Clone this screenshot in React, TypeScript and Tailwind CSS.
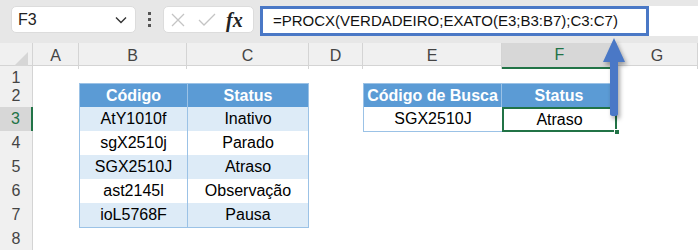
import React from "react";

// Column template shared by the header row and every sheet row
const cols = "grid grid-cols-[33px_46px_108px_122px_54px_139px_115px_1fr]";

const rowHeights = ["h-[17px]", "h-[24px]", "h-[24px]", "h-[24px]", "h-[24px]", "h-[24px]", "h-[24px]", "h-[23px]"];

const lookup = [
  ["AtY1010f", "Inativo"],
  ["sgX2510j", "Parado"],
  ["SGX2510J", "Atraso"],
  ["ast2145l", "Observação"],
  ["ioL5768F", "Pausa"],
];

const headCell = "bg-[#5b9bd5] text-white font-bold flex items-center justify-center border-b border-[#9bc2e6]";

const TopBar: React.FC = () => (
  <div className="h-[43px] bg-[#e7e7e7] flex items-start pt-[6px] relative">
    <div className="ml-[11px] w-[125px] h-[27px] bg-white rounded-[5px] border border-[#dcdcdc] flex items-center justify-between pl-[6px] pr-[8px]">
      <span className="text-[16px] text-[#222]">F3</span>
      <svg width="12" height="8" viewBox="0 0 12 8">
        <path d="M1 1.5 L6 6.5 L11 1.5" fill="none" stroke="#333" strokeWidth="1.4" />
      </svg>
    </div>
    <div className="w-[27px] h-[27px] flex flex-col items-center justify-center gap-[3px]">
      <span className="w-[3px] h-[3px] bg-[#555]" />
      <span className="w-[3px] h-[3px] bg-[#555]" />
      <span className="w-[3px] h-[3px] bg-[#555]" />
    </div>
    <div className="w-[91px] h-[27px] bg-white rounded-[5px] border border-[#dcdcdc] flex items-center pl-[6px]">
      <svg width="16" height="16" viewBox="0 0 16 16">
        <path d="M2 2 L14 14 M14 2 L2 14" stroke="#c4c4c4" strokeWidth="1.3" />
      </svg>
      <svg width="20" height="16" viewBox="0 0 20 16" className="ml-[11px]">
        <path d="M2 8 L7 13 L18 2" fill="none" stroke="#c4c4c4" strokeWidth="1.3" />
      </svg>
      <span className="ml-[9px] text-[20px] italic font-bold text-[#222] font-['Liberation_Serif',serif] leading-none">fx</span>
    </div>
    <div className="ml-[6px] flex-1 h-[30px] bg-white relative">
      <div className="absolute left-0 top-0 w-[389px] h-[30px] border-[3px] border-[#4a78c6] flex items-center pl-[10px]">
        <span className="text-[15px] text-[#111] whitespace-nowrap">=PROCX(VERDADEIRO;EXATO(E3;B3:B7);C3:C7)</span>
      </div>
    </div>
  </div>
);

const ColHeaders: React.FC = () => {
  const letters = ["A", "B", "C", "D", "E", "F", "G"];
  return (
    <div className={`${cols} h-[23px] bg-[#f0f0f0] border-b border-[#d4d4d4]`}>
      <div className="relative border-r border-[#d4d4d4]">
        <svg width="14" height="14" viewBox="0 0 14 14" className="absolute right-[4px] bottom-[3px]">
          <path d="M14 0 L14 14 L0 14 Z" fill="#d6d6d6" />
        </svg>
      </div>
      {letters.map((l) => (
        <div
          key={l}
          className={
            l === "F"
              ? "bg-[#d7d7d7] text-[#217346] border-b-2 border-[#217346] flex items-center justify-center text-[16px]"
              : "border-r border-[#d4d4d4] text-[#444] flex items-center justify-center text-[16px]"
          }
        >
          {l}
        </div>
      ))}
    </div>
  );
};

const App: React.FC = () => {
  return (
    <div className="w-[698px] h-[250px] bg-white overflow-hidden relative font-['Liberation_Sans',sans-serif]">
      <TopBar />
      <ColHeaders />
      {rowHeights.map((h, i) => {
        const row = i + 1;
        const data = row >= 3 && row <= 7 ? lookup[row - 3] : null;
        const shade = row % 2 === 1 ? "bg-[#ddebf7]" : "bg-white";
        return (
          <div key={row} className={`${cols} ${h} text-[16px] text-black`}>
            <div
              className={
                row === 3
                  ? "bg-[#d7d7d7] text-[#217346] border-r-2 border-[#217346] border-b border-b-[#d4d4d4] flex items-center justify-center text-[16px]"
                  : "bg-[#f0f0f0] text-[#444] border-r border-b border-[#d4d4d4] flex items-center justify-center text-[16px]"
              }
            >
              {row}
            </div>
            <div />
            {row === 2 ? (
              <>
                <div className={`${headCell} border-l border-t`}>Código</div>
                <div className={`${headCell} border-l border-l-[#9bc2e6] border-r border-t`}>Status</div>
              </>
            ) : data ? (
              <>
                <div className={`${shade} border-l border-b border-[#9bc2e6] flex items-center justify-center`}>{data[0]}</div>
                <div className={`${shade} border-l border-r border-b border-[#9bc2e6] flex items-center justify-center`}>{data[1]}</div>
              </>
            ) : (
              <>
                <div />
                <div />
              </>
            )}
            <div />
            {row === 2 ? (
              <>
                <div className={`${headCell} border-l border-t border-r border-r-[#9bc2e6]`}>Código de Busca</div>
                <div className={`${headCell} border-t border-r`}>Status</div>
              </>
            ) : row === 3 ? (
              <>
                <div className="bg-white border-l border-b border-[#9bc2e6] flex items-center justify-center">SGX2510J</div>
                <div className="relative bg-white flex items-center justify-center">
                  Atraso
                  <div className="absolute inset-0 border-2 border-[#217346]" />
                  <div className="absolute right-[-3px] bottom-[-3px] w-[6px] h-[6px] bg-[#217346] border border-white" />
                </div>
              </>
            ) : (
              <>
                <div />
                <div />
              </>
            )}
            <div />
          </div>
        );
      })}
      {/* callout arrow pointing up to the formula bar */}
      <svg width="40" height="90" viewBox="0 0 40 90" className="absolute left-[594px] top-[34px] drop-shadow-[2px_3px_2px_rgba(0,0,0,0.35)]">
        <path d="M20 4 L31 28 L24 28 L24 80 Q24 82 20 82 Q16 82 16 80 L16 28 L9 28 Z" fill="#4a78c6" />
      </svg>
    </div>
  );
};

export default App;
